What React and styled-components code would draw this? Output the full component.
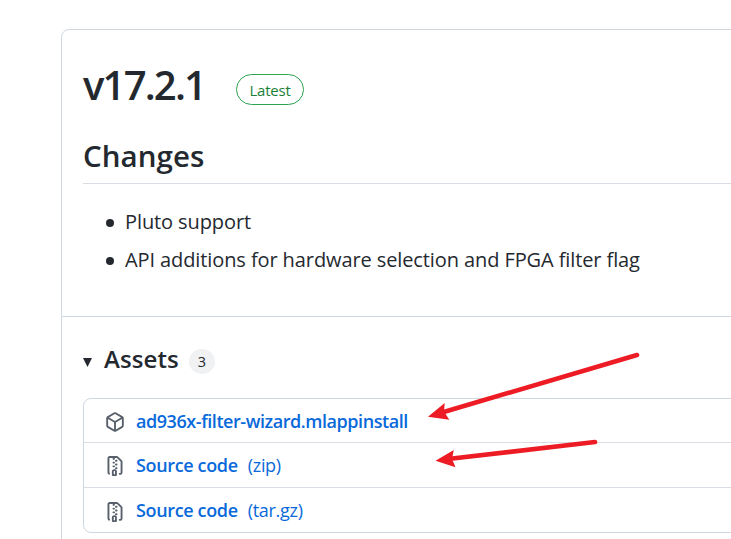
import React from 'react';
import styled, { createGlobalStyle } from 'styled-components';

const GlobalStyle = createGlobalStyle`
  *, *::before, *::after { box-sizing: border-box; }
  html, body { margin: 0; background: #fff; overflow: hidden; }
  body { font-family: 'Open Sans', 'Noto Sans', sans-serif; color: #24292f; }
`;

const Page = styled.main`
  position: relative;
  width: 731px;
  height: 539px;
  padding: 29px 0 0 61px;
  overflow: hidden;
`;

const Card = styled.article`
  width: 900px;
  height: 700px;
  border: 1px solid #d0d7de;
  border-radius: 8px;
`;

const Notes = styled.section`
  height: 287px;
  padding: 26px 0 0 21px;
  border-bottom: 1px solid #d0d7de;
`;

const TitleRow = styled.header`
  display: flex;
  align-items: center;
  height: 60px;
`;

const Title = styled.h1`
  width: 153px;
  margin: 0;
  font-size: 40px;
  line-height: 58px;
  padding-bottom: 2px;
  font-weight: 600;
  letter-spacing: -1.8px;
  white-space: nowrap;
`;

const LatestBadge = styled.span`
  width: 68px;
  height: 31px;
  margin-top: 7px;
  border: 1px solid #2da44e;
  border-radius: 16px;
  color: #1a7f37;
  font-size: 15px;
  line-height: 30px;
  letter-spacing: -0.2px;
  text-align: center;
`;

const Subtitle = styled.h2`
  height: 68px;
  margin: 0;
  padding-top: 20px;
  border-bottom: 1px solid #d8dee4;
  font-size: 29.5px;
  line-height: 40px;
  font-weight: 600;
  letter-spacing: 0.05px;
`;

const ChangeList = styled.ul`
  display: grid;
  gap: 8px;
  margin: 23px 0 0;
  padding: 0;
  list-style: none;
`;

const Change = styled.li`
  display: flex;
  align-items: center;
  gap: 11px;
  height: 30px;
  padding-left: 23px;
  font-size: 20px;
  line-height: 30px;
  letter-spacing: -0.1px;
  white-space: nowrap;

  &::before {
    content: '';
    width: 8px;
    height: 8px;
    margin-top: 1px;
    border-radius: 50%;
    background: currentColor;
  }
`;

const Assets = styled.section`
  padding: 22px 0 0 21px;
`;

const Summary = styled.header`
  display: flex;
  align-items: center;
  height: 40px;
`;

const Caret = styled.svg`
  width: 9px;
  height: 9px;
  margin-top: 6px;
`;

const AssetsTitle = styled.h3`
  width: 85px;
  margin: 0 0 0 12px;
  font-size: 24px;
  line-height: 40px;
  font-weight: 600;
  letter-spacing: 0.1px;
`;

const Counter = styled.span`
  width: 26px;
  height: 25px;
  margin-top: 4px;
  border-radius: 13px;
  background: #eff1f3;
  font-size: 14.5px;
  line-height: 26px;
  text-align: center;
`;

const AssetList = styled.ul`
  width: 840px;
  margin: 19px 0 0;
  padding: 0;
  border: 1px solid #d0d7de;
  border-radius: 8px;
  list-style: none;
`;

const Icon = styled.svg`
  width: 20px;
  height: 20px;
  margin: 2px 11px 0 0;
  fill: #57606a;
`;

const AssetRow = styled.li`
  display: flex;
  align-items: center;
  height: ${(p) => p.$height}px;
  padding: 1px 0 0 21px;
  color: #0969da;
  line-height: 30px;
  white-space: nowrap;

  & + & {
    padding-top: 0;
    border-top: 1px solid #d8dee4;
  }

  & + & ${Icon} { margin-top: 3px; }
`;

const AssetName = styled.a`
  font-size: 18px;
  font-weight: 600;
  letter-spacing: ${(p) => p.$spacing}px;
`;

const Format = styled.span`
  margin-left: 10px;
  font-size: 18px;
  letter-spacing: -0.3px;
`;

const Arrows = styled.svg`
  position: absolute;
  left: 420px;
  top: 340px;
  width: 230px;
  height: 140px;
  pointer-events: none;
`;

const PACKAGE =
  'm8.878.392 5.25 3.045c.54.314.872.89.872 1.514v6.098a1.75 1.75 0 0 1-.872 1.514l-5.25 3.045a1.75 1.75 0 0 1-1.756 0l-5.25-3.045A1.75 1.75 0 0 1 1 11.049V4.951c0-.624.332-1.201.872-1.514L7.122.392a1.75 1.75 0 0 1 1.756 0ZM7.875 1.69l-4.63 2.685L8 7.133l4.755-2.758-4.63-2.685a.248.248 0 0 0-.25 0ZM2.5 5.677v5.372c0 .09.047.171.125.216l4.625 2.683V8.432Zm6.25 8.271 4.625-2.683a.25.25 0 0 0 .125-.216V5.677L8.75 8.432Z';
const FILE_ZIP =
  'M3.5 1.75v11.5c0 .09.048.173.126.217a.75.75 0 0 1-.752 1.298A1.748 1.748 0 0 1 2 13.25V1.75C2 .784 2.784 0 3.75 0h5.586c.464 0 .909.185 1.237.513l2.914 2.914c.329.328.513.773.513 1.237v8.586A1.75 1.75 0 0 1 12.25 15h-.5a.75.75 0 0 1 0-1.5h.5a.25.25 0 0 0 .25-.25V4.664a.25.25 0 0 0-.073-.177L9.513 1.573a.25.25 0 0 0-.177-.073H7.25a.75.75 0 0 1 0 1.5h-.5a.75.75 0 0 1 0-1.5h-3a.25.25 0 0 0-.25.25Zm3.75 8.75h.5c.966 0 1.75.784 1.75 1.75v3a.75.75 0 0 1-.75.75h-2.5a.75.75 0 0 1-.75-.75v-3c0-.966.784-1.75 1.75-1.75ZM6 5.25a.75.75 0 0 1 .75-.75h.5a.75.75 0 0 1 0 1.5h-.5A.75.75 0 0 1 6 5.25Zm.75 2.25h.5a.75.75 0 0 1 0 1.5h-.5a.75.75 0 0 1 0-1.5ZM8 6.75A.75.75 0 0 1 8.75 6h.5a.75.75 0 0 1 0 1.5h-.5A.75.75 0 0 1 8 6.75ZM8.75 3h.5a.75.75 0 0 1 0 1.5h-.5a.75.75 0 0 1 0-1.5ZM8 9.75A.75.75 0 0 1 8.75 9h.5a.75.75 0 0 1 0 1.5h-.5A.75.75 0 0 1 8 9.75Zm-1 2.5v2.25h1v-2.25a.25.25 0 0 0-.25-.25h-.5a.25.25 0 0 0-.25.25Z';

const changes = [
  'Pluto support',
  'API additions for hardware selection and FPGA filter flag',
];

const assets = [
  { icon: PACKAGE, name: 'ad936x-filter-wizard.mlappinstall', height: 43, spacing: -0.44 },
  { icon: FILE_ZIP, name: 'Source code', format: '(zip)', height: 45, spacing: -0.35 },
  { icon: FILE_ZIP, name: 'Source code', format: '(tar.gz)', height: 45, spacing: -0.35 },
];

export default function App() {
  return (
    <>
      <GlobalStyle />
      <Page>
        <Card>
          <Notes>
            <TitleRow>
              <Title>v17.2.1</Title>
              <LatestBadge>Latest</LatestBadge>
            </TitleRow>
            <Subtitle>Changes</Subtitle>
            <ChangeList>
              {changes.map((text) => (
                <Change key={text}>{text}</Change>
              ))}
            </ChangeList>
          </Notes>
          <Assets>
            <Summary>
              <Caret viewBox="0 0 9 9"><path d="M0 0H9L4.5 9Z" fill="#24292f" /></Caret>
              <AssetsTitle>Assets</AssetsTitle>
              <Counter>3</Counter>
            </Summary>
            <AssetList>
              {assets.map((a, i) => (
                <AssetRow key={i} $height={a.height}>
                  <Icon viewBox="0 0 16 16"><path d={a.icon} /></Icon>
                  <AssetName $spacing={a.spacing}>{a.name}</AssetName>
                  {a.format && <Format>{a.format}</Format>}
                </AssetRow>
              ))}
            </AssetList>
          </Assets>
        </Card>
        <Arrows viewBox="420 340 230 140" fill="#ed1c24" stroke="#ed1c24">
          <path d="M637 355 442 412.5M595 442 448 459" strokeWidth="4.6" strokeLinecap="round" fill="none" />
          <path d="M428 416.8 444.7 403 444 411.5 449.3 419.8ZM435.5 460.8 453.8 450 452 459 455.5 467.2Z" stroke="none" />
        </Arrows>
      </Page>
    </>
  );
}
